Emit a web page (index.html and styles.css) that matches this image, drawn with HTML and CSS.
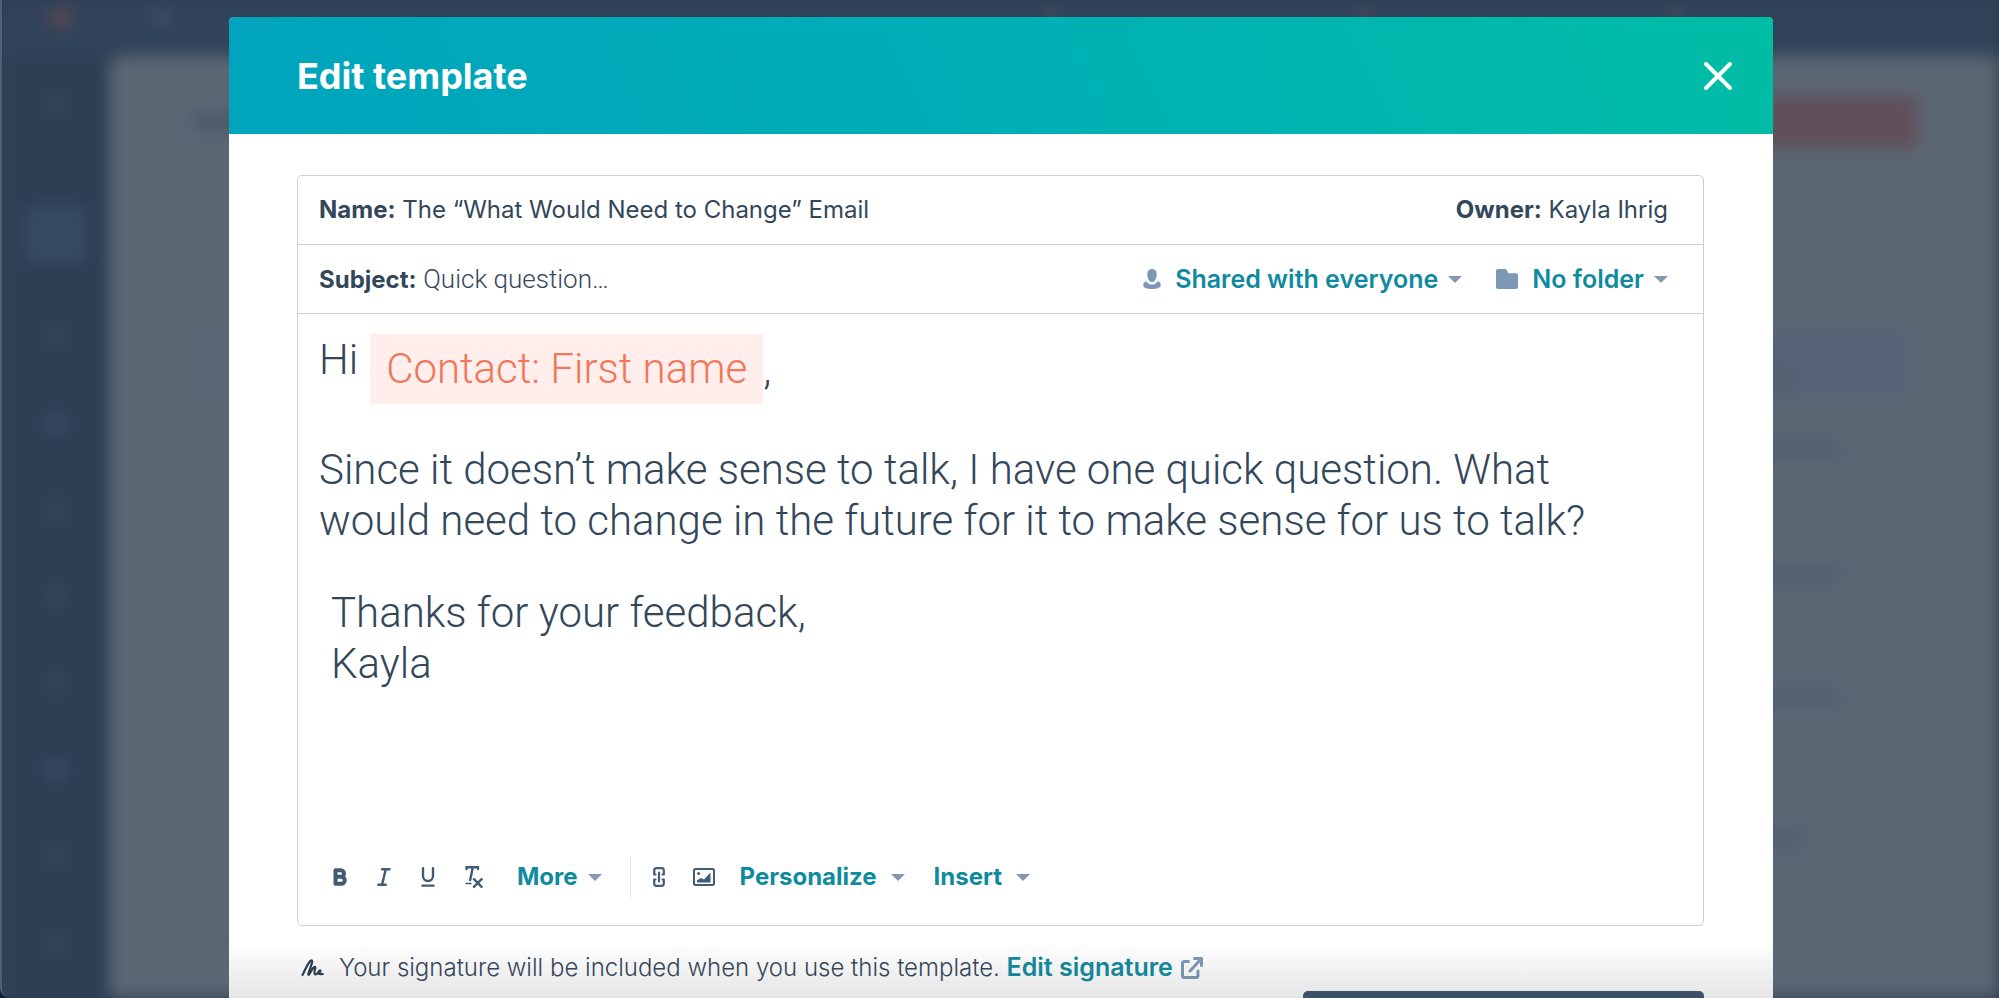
FILE: index.html
```html
<!DOCTYPE html>
<html lang="en">
<head>
<meta charset="utf-8">
<title>Edit template</title>
<link rel="stylesheet" href="styles.css">
</head>
<body>
<div class="backdrop" aria-hidden="true">
  <div class="app">
    <div class="topbar">
      <span class="logo"></span>
      <span class="search"></span>
      <span class="spark"></span>
      <span class="spark spark-red"></span>
      <span class="spark"></span>
    </div>
    <div class="columns">
      <div class="sidebar">
        <span class="nav nav-first"></span>
        <span class="nav nav-active"></span>
        <span class="nav"></span>
        <span class="nav nav-lit"></span>
        <span class="nav"></span>
        <span class="nav"></span>
        <span class="nav"></span>
        <span class="nav nav-lit"></span>
        <span class="nav"></span>
        <span class="nav"></span>
      </div>
      <div class="page">
        <div class="page-head"><span class="page-title"></span><span class="page-cta"></span></div>
        <div class="banner"><span class="line line-short"></span></div>
        <div class="records">
          <span class="line"></span>
          <span class="line"></span>
          <span class="line"></span>
          <span class="line line-mid"></span>
        </div>
      </div>
    </div>
  </div>
</div>

<div class="stage">
  <main class="modal" role="dialog" aria-labelledby="modal-title">
    <header class="modal-head">
      <h1 id="modal-title" class="modal-title">Edit template</h1>
      <button class="close" type="button" aria-label="Close">
        <svg width="28" height="28" viewBox="0 0 28 28" fill="none" stroke="#fff" stroke-width="4" stroke-linecap="round"><path d="M2 2l24 24M26 2L2 26"/></svg>
      </button>
    </header>

    <div class="modal-body">
      <section class="card">
        <div class="row">
          <p class="field"><strong>Name:</strong> The “What Would Need to Change” Email</p>
          <p class="field"><strong>Owner:</strong> Kayla Ihrig</p>
        </div>
        <div class="row">
          <p class="field"><strong>Subject:</strong> <span class="subject-text">Quick question…</span></p>
          <div class="pickers">
            <button class="link picker" type="button">
              <svg width="18" height="20" viewBox="0 0 18 20" fill="#7c98b6"><path d="M9 0c3 0 4.700 2.200 4.700 5.400 0 3.800-1.900 7.600-4.700 7.600S4.300 9.200 4.300 5.400C4.300 2.200 6 0 9 0z"/><path d="M3.600 12.200C4.800 14.400 6.600 15.600 9 15.600s4.200-1.200 5.400-3.400c2.200.6 3.400 1.800 3.400 3.800 0 2.600-3.600 4-8.800 4S.2 18.600.2 16c0-2 1.200-3.200 3.400-3.800z"/></svg>
              <span>Shared with everyone</span><i class="caret"></i>
            </button>
            <button class="link picker" type="button">
              <svg width="22" height="20" viewBox="0 0 22 20" fill="#7c98b6"><path d="M2 0h7c1 0 1.500.6 2 1.600L12.200 4.200H20c1.200 0 2 .8 2 2V18c0 1.200-.8 2-2 2H2c-1.200 0-2-.8-2-2V2C0 .8.800 0 2 0z"/></svg>
              <span>No folder</span><i class="caret"></i>
            </button>
          </div>
        </div>

        <div class="message">
          <p class="greeting"><span>Hi</span><span class="token">Contact: First name</span><span class="comma">,</span></p>
          <p class="para">Since it doesn’t make sense to talk, I have one quick question. What would need to change in the future for it to make sense for us to talk?</p>
          <p class="signoff">Thanks for your feedback,<br>Kayla</p>
        </div>

        <div class="toolbar" role="toolbar" aria-label="Formatting">
          <button class="tool" type="button" aria-label="Bold">
            <svg width="14" height="18" viewBox="0 0 14 18" fill="none" stroke="#425b76" stroke-width="4" stroke-linejoin="round"><path d="M2.500 2.200h5.200a3.300 3.300 0 0 1 0 6.600H2.500zM2.500 8.800h5.800a3.500 3.500 0 0 1 0 7H2.500z"/></svg>
          </button>
          <button class="tool" type="button" aria-label="Italic">
            <svg width="14" height="18" viewBox="0 0 14 18" fill="none" stroke="#425b76" stroke-width="2.400" stroke-linecap="round"><path d="M5 1.200h7.500M1.400 16.800h7.400M8.800 1.200L5 16.800"/></svg>
          </button>
          <button class="tool" type="button" aria-label="Underline">
            <svg width="14" height="20" viewBox="0 0 14 20" fill="none" stroke="#425b76" stroke-width="2.400" stroke-linecap="round"><path d="M2 1.200V9a5 5 0 0 0 10 0V1.200M1.400 18.600h11.200"/></svg>
          </button>
          <button class="tool tool-clear" type="button" aria-label="Clear formatting">
            <svg width="18" height="22" viewBox="0 0 18 22" fill="none" stroke="#425b76" stroke-width="2.400" stroke-linecap="round"><path d="M1.500 3V1.200H13V3M7.800 1.200L5.200 14"/><path d="M1 17.500h5" stroke-width="1.600"/><path d="M9 13.200l7.600 7.600M16.600 13.200L9 20.800"/></svg>
          </button>
          <button class="link menu" type="button"><span>More</span><i class="caret"></i></button>
          <span class="divider"></span>
          <button class="tool" type="button" aria-label="Link">
            <svg width="12" height="20" viewBox="0 0 12 20" fill="none" stroke="#425b76" stroke-width="2.200" stroke-linecap="round" stroke-linejoin="round"><path d="M2.500 7.500H1.200V3.500Q1.200 1.200 3.500 1.200h5q2.300 0 2.300 2.300v4H9.500M2.500 12.500H1.200v4q0 2.300 2.300 2.300h5q2.300 0 2.300-2.300v-4H9.500M6 5.500v9"/></svg>
          </button>
          <button class="tool tool-image" type="button" aria-label="Image">
            <svg width="22" height="18" viewBox="0 0 22 18"><rect x="1" y="1" width="20" height="16" rx="1.500" fill="none" stroke="#425b76" stroke-width="2"/><circle cx="5.600" cy="5.400" r="1.500" fill="#425b76"/><path d="M4 14.500v-2.300L8 10l3 1.500L17.500 4.500v10z" fill="#425b76"/></svg>
          </button>
          <button class="link menu menu-wide" type="button"><span>Personalize</span><i class="caret"></i></button>
          <button class="link menu menu-wide" type="button"><span>Insert</span><i class="caret"></i></button>
        </div>
      </section>

      <p class="signature">
        <svg width="23" height="18" viewBox="0 0 23 18" fill="none" stroke="#2d3e50" stroke-width="2.200" stroke-linecap="round" stroke-linejoin="round"><path d="M1.500 16C4 11 6.500 4.500 9.600 1.800c1.400-1 2 .4 1.400 2L7.400 14.600c-.4 1.600.5 1.600 1.200.2C10 12 11.600 8.800 13.400 8c1-.3 1.200.6.8 1.600-.8 2.200-1.400 5.800.4 5.800 2 0 3.400-4.600 4.600-4 1 .6-.6 2.600-2.400 2.600 1 1.600 2.800 1 5 1"/></svg>
        <span>Your signature will be included when you use this template. <a class="link" href="#signature">Edit signature</a></span>
        <svg class="external" width="22" height="22" viewBox="0 0 22 22" fill="none" stroke="#7c98b6" stroke-width="3" stroke-linecap="round" stroke-linejoin="round"><path d="M7.500 4.500H3.500q-2 0-2 2v12q0 2 2 2H15q2 0 2-2V14M13.500 1.500h7v7M20 2L9 14"/></svg>
      </p>
    </div>
    <div class="fade"></div>
    <div class="toast"></div>
  </main>
</div>
</body>
</html>
```
FILE: styles.css
```css
* { box-sizing: border-box; }

body {
  margin: 0;
  height: 100vh;
  overflow: hidden;
  background: #101c2c;
  color: #33475b;
  font: 24px/30px Inter, "Liberation Sans", sans-serif;
}

h1, p { margin: 0; }

button {
  padding: 0;
  border: 0;
  background: none;
  font: inherit;
  color: inherit;
  cursor: pointer;
}

svg { display: block; flex: none; }

/* Blurred application behind the dialog */
.backdrop {
  position: absolute;
  inset: 0;
  overflow: hidden;
  border-left: 2px solid #4c6077;
  border-bottom-left-radius: 10px;
  background: #2d3e53;
}

.app {
  display: flex;
  flex-direction: column;
  height: 100%;
  filter: blur(8px);
}

.topbar {
  display: flex;
  align-items: center;
  height: 56px;
  padding: 0 320px 22px 46px;
  background: #31435a;
}

.logo { width: 26px; height: 18px; border-radius: 9px; background: #5a4850; }
.search { width: 20px; height: 20px; margin-left: 78px; margin-right: auto; border-radius: 10px; background: #3b4f69; }
.spark { width: 10px; height: 14px; margin-left: 300px; background: #51505a; }
.spark-red { background: #624c57; }

.columns { display: flex; flex: 1; min-height: 0; }

.sidebar {
  display: flex;
  flex-direction: column;
  align-items: center;
  justify-content: space-between;
  flex: none;
  width: 107px;
  padding: 34px 0 42px;
  background: linear-gradient(90deg, #34485a, #2d3e53 14px);
}

.nav { width: 26px; height: 26px; border-radius: 13px; background: #334557; }
.nav-first { margin-bottom: 28px; }
.nav-active { width: 60px; height: 58px; border-radius: 8px; background: #364b64; }
.nav-lit { background: #38475f; }

.page {
  flex: 1;
  padding: 40px 82px 0 84px;
  border-top-left-radius: 12px;
  background: #5b6673;
}

.page-head { display: flex; justify-content: space-between; align-items: center; height: 52px; }
.page-title { width: 200px; height: 20px; background: #4b5a6d; }
.page-cta { width: 200px; height: 52px; border-radius: 4px; background: #614f59; }

.banner {
  display: flex;
  align-items: flex-end;
  justify-content: flex-end;
  height: 66px;
  margin: 182px 8px 0 0;
  padding: 0 112px 8px 0;
  background: linear-gradient(90deg, #5a6575 10%, #566377 90%);
}

.records {
  display: flex;
  flex-direction: column;
  align-items: flex-end;
  gap: 104px;
  padding: 44px 76px 0 0;
}

.line { width: 120px; height: 20px; background: #515f6e; }
.line-short { width: 80px; }
.line-mid { margin: 16px 36px 0 0; }

/* Dialog */
.stage {
  position: relative;
  display: flex;
  height: 100%;
  padding: 17px 226px 0 229px;
}

.modal {
  position: relative;
  display: flex;
  flex: 1;
  flex-direction: column;
  overflow: hidden;
  border-radius: 5px 5px 0 0;
  background: #fff;
}

.modal-head {
  display: flex;
  align-items: center;
  justify-content: space-between;
  flex: none;
  height: 117px;
  padding: 0 41px 0 68px;
  background: linear-gradient(65deg, #00a4bd 0%, #00afb6 50%, #00bda5 100%);
}

.modal-title { color: #fff; font-size: 36px; font-weight: 700; line-height: 44px; }
.close { display: flex; }

.modal-body { flex: 1; padding: 41px 69px 0 68px; }

.card {
  display: flex;
  flex-direction: column;
  height: 751px;
  border: 1px solid #c9d0d5;
  border-radius: 5px;
}

.row {
  display: flex;
  align-items: center;
  justify-content: space-between;
  height: 69px;
  padding: 0 35px 0 21px;
  border-bottom: 1px solid #c9d0d5;
}

.field strong { font-weight: 700; }
.subject-text { font: 350 26px/30px Roboto, "Liberation Sans", sans-serif; }

.pickers { display: flex; gap: 34px; }

.link {
  color: #0f8ba0;
  font-size: 25px;
  font-weight: 600;
  text-decoration: none;
}

.picker { display: flex; align-items: center; }
.picker svg { margin-right: 14px; }

.caret {
  flex: none;
  margin-left: 10px;
  border: 7px solid transparent;
  border-top-color: #8497b3;
  border-bottom: 0;
}

.message {
  flex: 1;
  padding: 20px 110px 0 21px;
  font: 350 42px/51px Roboto, "Liberation Sans", sans-serif;
}

.greeting { display: flex; align-items: flex-start; }

.token {
  margin-left: 12px;
  padding: 9px 16px 10px;
  border-radius: 3px;
  background: #ffeeeb;
  color: #f2765a;
}

.comma { align-self: center; }
.para { margin-top: 40px; }
.signoff { margin: 41px 0 0 12px; }

.toolbar {
  display: flex;
  align-items: center;
  height: 96px;
  padding: 0 35px;
}

.tool { display: flex; margin-right: 30px; }
.tool-clear { margin-right: 34px; }
.tool-image { margin: 0 25px 0 -2px; }
.menu { display: flex; align-items: center; font-size: 24px; font-weight: 700; }
.menu-wide { margin-right: 29px; }
.menu-wide .caret { margin-left: 14px; }
.divider { width: 1px; height: 42px; margin: 0 22px 0 28px; background: #e3e8ec; }

.signature { display: flex; align-items: center; margin-top: 26px; padding-left: 4px; font-weight: 350; }
.signature > span { margin-left: 15px; }
.external { margin-left: 8px; }

.fade {
  position: absolute;
  inset: auto 0 0;
  height: 56px;
  background: linear-gradient(rgba(70, 70, 70, 0), rgba(70, 70, 70, 0.14));
  pointer-events: none;
}

.toast {
  position: absolute;
  right: 69px;
  bottom: 0;
  width: 26%;
  height: 7px;
  border-radius: 5px 5px 0 0;
  background: #3c5166;
}
```
